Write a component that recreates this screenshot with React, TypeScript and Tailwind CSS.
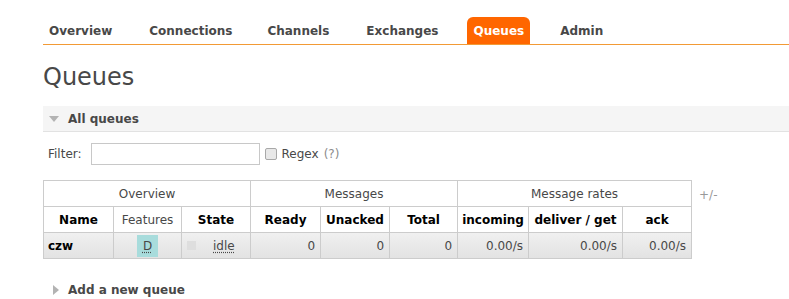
import React from "react";

const tabs = [
  { label: "Overview", mr: 37 },
  { label: "Connections", mr: 35 },
  { label: "Channels", mr: 37 },
  { label: "Exchanges", mr: 29 },
  { label: "Queues", mr: 30 },
  { label: "Admin", mr: 0 },
];

const cols = [
  { label: "Name", w: 70, bold: true },
  { label: "Features", w: 68, bold: false },
  { label: "State", w: 69, bold: true },
  { label: "Ready", w: 70, bold: true },
  { label: "Unacked", w: 69, bold: true },
  { label: "Total", w: 68, bold: true },
  { label: "incoming", w: 71, bold: true },
  { label: "deliver / get", w: 94, bold: true },
  { label: "ack", w: 69, bold: true },
];

export default function App() {
  return (
    <div className="w-[789px] h-[299px] overflow-hidden bg-white text-[#484848] font-['DejaVu_Sans',Verdana,sans-serif] text-[12px]">
      {/* Menu */}
      <div className="ml-[43px] mt-[18px] flex items-end h-[27px] border-b border-[#f29a35] pl-[6px]">
        {tabs.map((t) => (
          <div
            key={t.label}
            style={{ marginRight: t.mr }}
            className={`h-[27px] flex items-center font-bold text-[12px] ${
              t.label === "Queues" ? "bg-[#ff6600] text-white rounded-t-[6px] px-[6px]" : ""
            }`}
          >
            {t.label}
          </div>
        ))}
      </div>

      {/* Title */}
      <h1 className="ml-[43px] mt-[17px] text-[24px] leading-[30px] text-[#484848]">Queues</h1>

      {/* All queues */}
      <div className="ml-[43px] mt-[14px] h-[26px] bg-[#f5f5f5] border-b border-[#e2e2e2] flex items-center">
        <svg width="10" height="6" viewBox="0 0 10 6" className="ml-[6px] mr-[9px]">
          <path d="M0 0 L10 0 L5 6 Z" fill="#b3b3b3" />
        </svg>
        <span className="font-bold text-[12px]">All queues</span>
      </div>

      {/* Filter */}
      <div className="ml-[48px] mt-[11px] flex items-center h-[22px]">
        <span>Filter:</span>
        <div className="ml-[9px] w-[169px] h-[22px] border border-[#c8c8c8] bg-white" />
        <div className="ml-[5px] w-[12px] h-[12px] border border-[#a8a8a8] rounded-[2px] bg-[#e8e8e8]" />
        <span className="ml-[5px]">Regex</span>
        <span className="ml-[5px] text-[#8c8c8c]">(?)</span>
      </div>

      {/* Table */}
      <div className="ml-[43px] mt-[15px] flex items-start">
        <table className="border-collapse table-fixed text-[12px]" style={{ width: 648 }}>
          <colgroup>
            {cols.map((c) => (
              <col key={c.label} style={{ width: c.w }} />
            ))}
          </colgroup>
          <thead>
            <tr className="h-[26px]">
              <th colSpan={3} className="border border-[#ccc] font-normal text-[#484848]">Overview</th>
              <th colSpan={3} className="border border-[#ccc] font-normal text-[#484848]">Messages</th>
              <th colSpan={3} className="border border-[#ccc] font-normal text-[#484848]">Message rates</th>
            </tr>
            <tr className="h-[26px]">
              {cols.map((c) => (
                <th
                  key={c.label}
                  className={`border border-[#ccc] px-[2px] whitespace-nowrap ${
                    c.bold ? "font-bold text-black" : "font-normal text-[#484848]"
                  }`}
                >
                  {c.label}
                </th>
              ))}
            </tr>
          </thead>
          <tbody>
            <tr className="h-[26px] bg-gradient-to-b from-[#f0f0f0] to-[#e2e2e2]">
              <td className="border border-[#ccc] px-[4px] font-bold text-black">czw</td>
              <td className="border border-[#ccc] text-center">
                <span className="inline-block bg-[#a8dcdc] px-[6px] leading-[22px]">
                  <span className="underline decoration-dotted underline-offset-2">D</span>
                </span>
              </td>
              <td className="border border-[#ccc]">
                <div className="flex items-center">
                  <span className="ml-[5px] w-[9px] h-[9px] bg-[#dedede]" />
                  <span className="ml-[17px] underline decoration-dotted underline-offset-2">idle</span>
                </div>
              </td>
              <td className="border border-[#ccc] text-right pr-[5px]">0</td>
              <td className="border border-[#ccc] text-right pr-[5px]">0</td>
              <td className="border border-[#ccc] text-right pr-[5px]">0</td>
              <td className="border border-[#ccc] text-right pr-[5px]">0.00/s</td>
              <td className="border border-[#ccc] text-right pr-[5px]">0.00/s</td>
              <td className="border border-[#ccc] text-right pr-[5px]">0.00/s</td>
            </tr>
          </tbody>
        </table>
        <span className="ml-[7px] mt-[6px] text-[#999]">+/-</span>
      </div>

      {/* Add a new queue */}
      <div className="ml-[43px] mt-[22px] flex items-center h-[18px]">
        <svg width="6" height="10" viewBox="0 0 6 10" className="ml-[10px] mr-[9px]">
          <path d="M0 0 L6 5 L0 10 Z" fill="#b3b3b3" />
        </svg>
        <span className="font-bold text-[12px]">Add a new queue</span>
      </div>
    </div>
  );
}
